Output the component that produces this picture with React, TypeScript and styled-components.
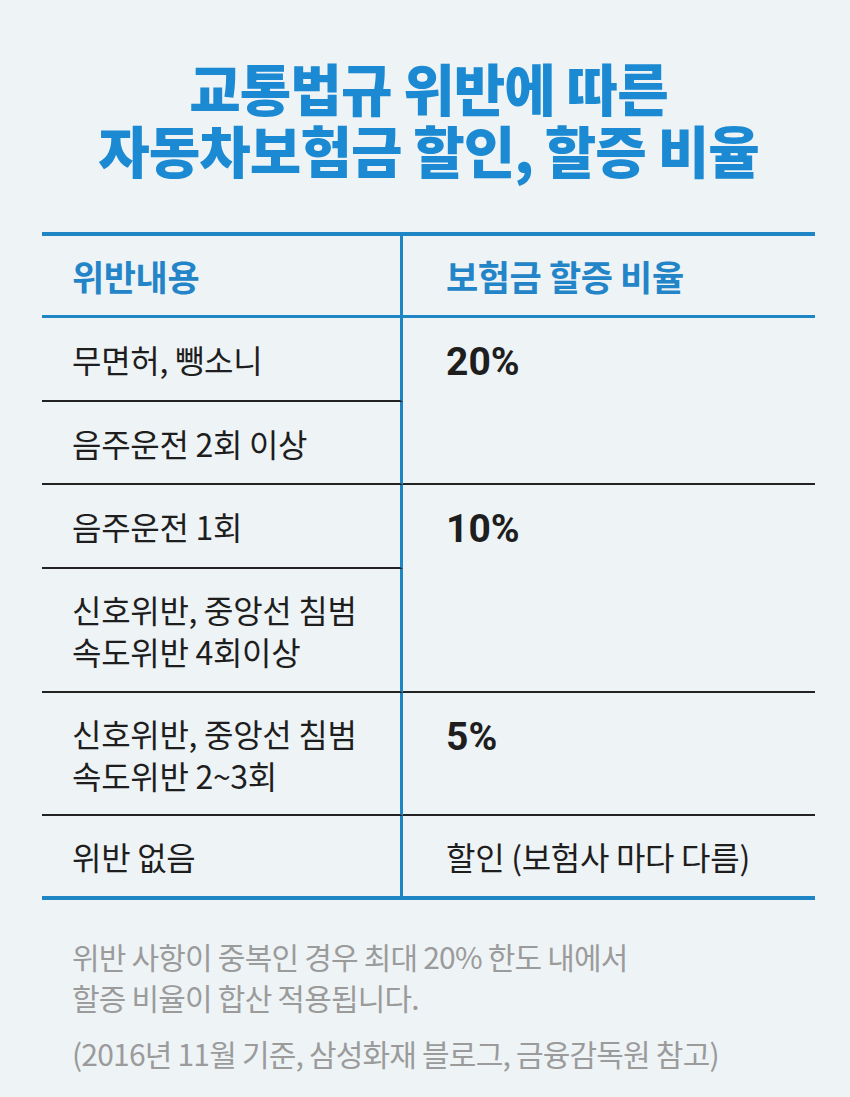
import React from "react";
import styled, { createGlobalStyle } from "styled-components";

const Global = createGlobalStyle`
  html, body { margin: 0; padding: 0; background: #eef3f6; }
  body { font-family: "Noto Sans CJK KR", "Noto Sans", sans-serif; }
`;

const Page = styled.div`
  width: 850px;
  height: 1097px;
  background: #eef3f6;
  box-sizing: border-box;
  padding: 56px 35px 0 42px;
  display: flex;
  flex-direction: column;
`;

const Title = styled.h1`
  margin: 0 0 52px 0;
  text-align: center;
  color: #1c8ad3;
  font-family: "Noto Sans CJK KR", sans-serif;
  font-weight: 900;
  font-size: 56px;
  line-height: 62px;
  letter-spacing: -1px;
`;

const Table = styled.div`
  display: grid;
  grid-template-columns: 361px 1fr;
  grid-template-rows: 82px 84px 83px 84px 124px 123px 80px;
  border-top: 4px solid #1f86c6;
  border-bottom: 4px solid #1f86c6;
  color: #1e1e1e;
`;

const Cell = styled.div<{ $left?: boolean; $line?: "blue" | "black" | "none"; $row: string; $top?: boolean; $bold?: boolean }>`
  grid-column: ${(p) => (p.$left ? "1" : "2")};
  grid-row: ${(p) => p.$row};
  box-sizing: border-box;
  border-right: ${(p) => (p.$left ? "3px solid #1f86c6" : "none")};
  border-bottom: ${(p) =>
    p.$line === "blue" ? "3px solid #1f86c6" : p.$line === "black" ? "2px solid #222" : "none"};
  padding-left: ${(p) => (p.$left ? "30px" : "43px")};
  padding-top: ${(p) => (p.$top ? "23px" : "0")};
  display: flex;
  flex-direction: column;
  justify-content: ${(p) => (p.$top ? "flex-start" : "center")};
  font-size: ${(p) => (p.$bold ? "39px" : "32px")};
  font-weight: ${(p) => (p.$bold ? 700 : 400)};
  font-family: ${(p) =>
    p.$bold ? `"Roboto", "Noto Sans CJK KR", sans-serif` : `"Noto Sans CJK KR", sans-serif`};
  line-height: 42px;
  letter-spacing: ${(p) => (p.$bold ? "0" : "-0.3px")};
`;

const Head = styled.span`
  color: #2385c8;
  font-weight: 700;
  font-size: 35px;
  letter-spacing: -0.4px;
`;

const Notes = styled.div`
  margin-top: 36px;
  padding-left: 30px;
  color: #9b9b9b;
  font-size: 30px;
  line-height: 41px;
  letter-spacing: -0.8px;
`;

const Source = styled.p`
  margin: 15px 0 0 0;
`;

const Line = styled.div``;

export default function App() {
  return (
    <>
      <Global />
      <Page>
        <Title>
          교통법규 위반에 따른
          <br />
          자동차보험금 할인, 할증 비율
        </Title>
        <Table>
          <Cell $left $row="1" $line="blue">
            <Head>위반내용</Head>
          </Cell>
          <Cell $row="1" $line="blue">
            <Head>보험금 할증 비율</Head>
          </Cell>

          <Cell $left $row="2" $line="black">무면허, 뺑소니</Cell>
          <Cell $left $row="3" $line="black">음주운전 2회 이상</Cell>
          <Cell $row="2 / span 2" $line="black" $top $bold>20%</Cell>

          <Cell $left $row="4" $line="black">음주운전 1회</Cell>
          <Cell $left $row="5" $line="black">
            <Line>신호위반, 중앙선 침범</Line>
            <Line>속도위반 4회이상</Line>
          </Cell>
          <Cell $row="4 / span 2" $line="black" $top $bold>10%</Cell>

          <Cell $left $row="6" $line="black">
            <Line>신호위반, 중앙선 침범</Line>
            <Line>속도위반 2~3회</Line>
          </Cell>
          <Cell $row="6" $line="black" $top $bold>5%</Cell>

          <Cell $left $row="7" $line="none">위반 없음</Cell>
          <Cell $row="7" $line="none">할인 (보험사 마다 다름)</Cell>
        </Table>
        <Notes>
          <Line>위반 사항이 중복인 경우 최대 20% 한도 내에서</Line>
          <Line>할증 비율이 합산 적용됩니다.</Line>
          <Source>(2016년 11월 기준, 삼성화재 블로그, 금융감독원 참고)</Source>
        </Notes>
      </Page>
    </>
  );
}
